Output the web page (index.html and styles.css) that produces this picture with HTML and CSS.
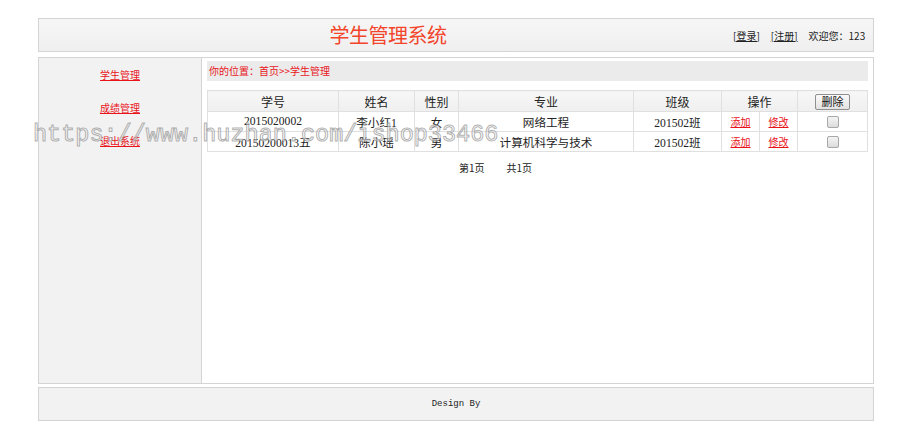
FILE: index.html
```html
<!DOCTYPE html>
<html lang="zh-CN">
<head>
<meta charset="utf-8">
<title>学生管理系统</title>
<link rel="stylesheet" href="styles.css">
</head>
<body>
<div class="page">
  <header class="top">
    <div class="brand"><h1 class="title">学生管理系统</h1></div>
    <div class="user">
      <a class="ulink" href="#">[登录]</a>
      <a class="ulink" href="#">[注册]</a>
      <span class="welcome">欢迎您：123</span>
    </div>
  </header>
  <div class="main">
    <nav class="side">
      <a class="slink" href="#">学生管理</a>
      <a class="slink" href="#">成绩管理</a>
      <a class="slink" href="#">退出系统</a>
    </nav>
    <section class="content">
      <div class="crumb">你的位置：首页&gt;&gt;学生管理</div>
      <table class="grid">
        <colgroup>
          <col class="c1"><col class="c2"><col class="c3"><col class="c4"><col class="c5"><col class="c6"><col class="c7"><col class="c8">
        </colgroup>
        <thead>
          <tr>
            <th>学号</th><th>姓名</th><th>性别</th><th>专业</th><th>班级</th><th colspan="2">操作</th>
            <th><button class="del" type="button">删除</button></th>
          </tr>
        </thead>
        <tbody>
          <tr>
            <td>2015020002</td><td>李小红1</td><td>女</td><td>网络工程</td><td>201502班</td>
            <td><a class="op" href="#">添加</a></td><td><a class="op" href="#">修改</a></td>
            <td><span class="chk"></span></td>
          </tr>
          <tr>
            <td>20150200013五</td><td>陈小瑶</td><td>男</td><td>计算机科学与技术</td><td>201502班</td>
            <td><a class="op" href="#">添加</a></td><td><a class="op" href="#">修改</a></td>
            <td><span class="chk"></span></td>
          </tr>
        </tbody>
      </table>
      <div class="pager"><span>第1页</span><span>共1页</span></div>
    </section>
  </div>
  <footer class="foot">Design By</footer>
  <div class="watermark">https://www.huzhan.com/ishop33466</div>
</div>
</body>
</html>
```

FILE: styles.css
```css
html, body {
  margin: 0;
  padding: 0;
  background: #fff;
}
body {
  font-family: "Liberation Serif", "Noto Sans CJK SC", serif;
  font-size: 12px;
  color: #222;
}
.page {
  position: relative;
  width: 836px;
  padding: 18px 0 0 38px;
}
.top {
  display: flex;
  align-items: center;
  height: 32px;
  border: 1px solid #d4d4d4;
  background: linear-gradient(#f6f6f6, #efefef);
}
.brand {
  flex: 1;
  text-align: center;
  padding-left: 4px;
}
.title {
  margin: 0;
  font-family: "Noto Sans CJK SC", serif;
  font-weight: normal;
  font-size: 20px;
  line-height: 24px;
  color: #f2452b;
  letter-spacing: -0.5px;
}
.user {
  flex: none;
  display: flex;
  align-items: center;
  gap: 11px;
  width: 140px;
  white-space: nowrap;
  font-family: "Noto Sans CJK SC", sans-serif;
  font-size: 10px;
}
.ulink {
  color: #222;
  text-decoration: underline;
}
.welcome {
  color: #222;
}
.main {
  display: flex;
  margin-top: 5px;
  height: 325px;
  border: 1px solid #d4d4d4;
}
.side {
  width: 163px;
  background: #f2f2f2;
  border-right: 1px solid #d4d4d4;
  display: flex;
  flex-direction: column;
  align-items: center;
}
.slink {
  display: block;
  height: 33px;
  line-height: 33px;
  color: #e8141a;
  text-decoration: underline;
  font-family: "Noto Sans CJK SC", sans-serif;
  font-size: 10px;
}
.content {
  flex: 1;
  padding: 3px 5px 0 5px;
}
.crumb {
  height: 20px;
  line-height: 20px;
  background: #ebebeb;
  color: #e8141a;
  padding-left: 2px;
  font-family: "Noto Sans CJK SC", sans-serif;
  font-size: 10px;
}
.grid {
  margin-top: 9px;
  border-collapse: collapse;
  width: 660px;
  table-layout: fixed;
}
.c1 { width: 131px; }
.c2 { width: 76px; }
.c3 { width: 44px; }
.c4 { width: 175px; }
.c5 { width: 88px; }
.c6 { width: 38px; }
.c7 { width: 38px; }
.c8 { width: 70px; }
.grid th, .grid td {
  border: 1px solid #e0e0e0;
  text-align: center;
  padding: 0;
}
.grid th {
  height: 20px;
  background: linear-gradient(#f7f7f7, #efefef);
  font-family: "Noto Sans CJK SC", sans-serif;
  font-weight: normal;
  font-size: 12px;
  color: #222;
}
.grid td {
  height: 19px;
  font-family: "Liberation Serif", "Noto Sans CJK SC", serif;
  font-size: 11.6px;
  color: #222;
}
.op {
  color: #e8141a;
  text-decoration: underline;
  font-family: "Noto Sans CJK SC", sans-serif;
  font-size: 10px;
}
.del {
  height: 16px;
  width: 35px;
  padding: 0;
  border: 1px solid #8f8f8f;
  border-radius: 2px;
  background: linear-gradient(#fafafa, #e2e2e2);
  font-family: "Noto Sans CJK SC", sans-serif;
  font-size: 11px;
  line-height: 13px;
  color: #111;
}
.chk {
  display: inline-block;
  vertical-align: middle;
  width: 10px;
  height: 10px;
  border: 1px solid #a8a8a8;
  border-radius: 2px;
  background: linear-gradient(#f4f4f4, #dcdcdc);
}
.pager {
  display: flex;
  gap: 22px;
  margin-top: 9px;
  padding-left: 252px;
  font-family: "Noto Sans CJK SC", sans-serif;
  font-size: 10px;
  line-height: 14px;
  color: #222;
}
.foot {
  margin-top: 3px;
  height: 32px;
  line-height: 32px;
  border: 1px solid #d4d4d4;
  background: #f2f2f2;
  text-align: center;
  font-family: "Liberation Mono", monospace;
  font-size: 9px;
  color: #222;
}
.watermark {
  position: absolute;
  left: 33px;
  top: 120px;
  font-family: "Liberation Mono", monospace;
  font-size: 23.5px;
  line-height: 30px;
  color: rgba(255, 255, 255, 0.55);
  -webkit-text-stroke: 1px rgba(150, 150, 150, 0.75);
  white-space: nowrap;
  pointer-events: none;
}
```
